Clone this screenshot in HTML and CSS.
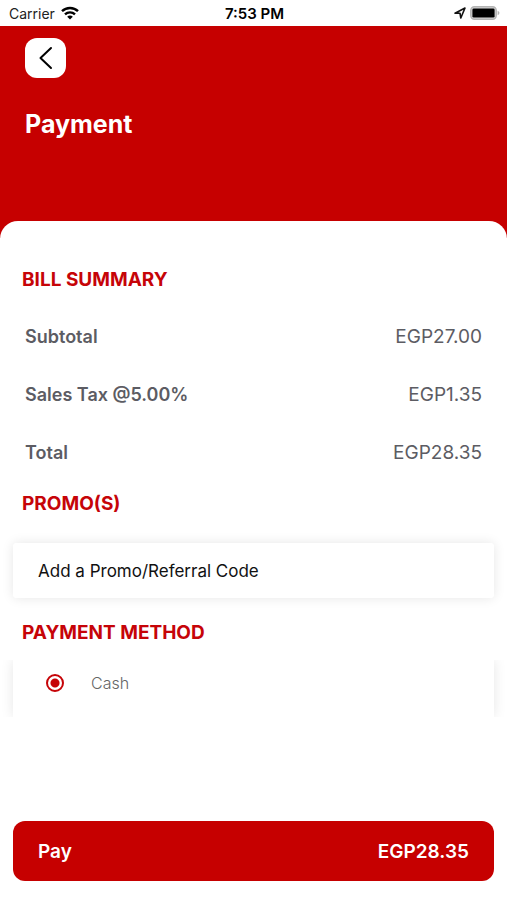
FILE: index.html
```html
<!DOCTYPE html>
<html lang="en">
<head>
<meta charset="utf-8">
<meta name="viewport" content="width=device-width, initial-scale=1">
<title>Payment</title>
<link rel="stylesheet" href="styles.css">
</head>
<body>
<div class="screen">
  <div class="status">
    <div class="status-left">
      <span>Carrier</span>
      <svg width="18" height="14" viewBox="0 0 18 14" fill="none" stroke="#000" stroke-width="2.4" aria-hidden="true">
        <path d="M1 5.2C5.4.9 12.6.9 17 5.2"/>
        <path d="M4 8.4c2.8-2.7 7.2-2.7 10 0"/>
        <path d="M6.2 10.7c1.6-1.5 4-1.5 5.6 0L9 13.6z" fill="#000" stroke="none"/>
      </svg>
    </div>
    <span class="status-time">7:53 PM</span>
    <div class="status-right">
      <svg width="12" height="12" viewBox="0 0 12 12" fill="none" stroke="#111" stroke-width="1.6" stroke-linejoin="round" aria-hidden="true">
        <path d="M1 6.2 11 1 6.8 11 6 6.2z"/>
      </svg>
      <svg width="30" height="14" viewBox="0 0 30 14" aria-hidden="true">
        <rect x=".8" y=".8" width="25.4" height="12.4" rx="3.6" fill="#d8d8d8" stroke="#b4b4b4" stroke-width="1.5"/>
        <rect x="2.4" y="2.4" width="22.2" height="9.2" rx="1.4" fill="#000"/>
        <path d="M27.6 4.8c2.4.8 2.4 3.6 0 4.4z" fill="#b4b4b4"/>
      </svg>
    </div>
  </div>

  <header class="header">
    <button class="back" type="button" aria-label="Back">
      <svg width="16" height="24" viewBox="0 0 16 24" fill="none" stroke="#000" stroke-width="2" stroke-linecap="round" stroke-linejoin="round" aria-hidden="true">
        <path d="M13 2 2.5 12 13 22"/>
      </svg>
    </button>
    <h1>Payment</h1>
  </header>

  <main class="sheet">
    <h2>BILL SUMMARY</h2>
    <dl class="bill">
      <div class="bill-row"><dt>Subtotal</dt><dd>EGP27.00</dd></div>
      <div class="bill-row"><dt>Sales Tax @5.00%</dt><dd>EGP1.35</dd></div>
      <div class="bill-row"><dt>Total</dt><dd>EGP28.35</dd></div>
    </dl>

    <h2>PROMO(S)</h2>
    <button class="promo" type="button">Add a Promo/Referral Code</button>

    <h2>PAYMENT METHOD</h2>
    <div class="methods">
      <div class="methods-card">
        <label class="method"><input type="radio" name="method" checked><span>Cash</span></label>
      </div>
    </div>
  </main>

  <footer class="footer">
    <button class="pay" type="button"><span>Pay</span><span>EGP28.35</span></button>
  </footer>
</div>
</body>
</html>
```

FILE: styles.css
```css
* {
  box-sizing: border-box;
}

body {
  margin: 0;
  background: #fff;
  font-family: Inter, "Liberation Sans", sans-serif;
}

button {
  border: 0;
  font-family: inherit;
  cursor: pointer;
}

svg {
  display: block;
}

.screen {
  display: flex;
  flex-direction: column;
  min-height: 100vh;
}

.status {
  display: grid;
  grid-template-columns: 1fr auto 1fr;
  align-items: center;
  height: 26px;
  padding: 0 7px 0 9px;
  font-size: 14px;
  color: #222;
}

.status-left,
.status-right {
  display: flex;
  align-items: center;
  gap: 6px;
}

.status-right {
  justify-content: flex-end;
  gap: 4px;
}

.status-time {
  font-size: 15px;
  font-weight: 600;
  color: #000;
}

.header {
  padding: 12px 25px 98px;
  background: #c60000;
}

.back {
  display: flex;
  align-items: center;
  justify-content: center;
  width: 41px;
  height: 40px;
  padding: 0;
  border-radius: 12px;
  background: #fff;
}

h1 {
  margin: 30px 0 0;
  font-size: 25px;
  line-height: 32px;
  font-weight: 700;
  color: #fff;
}

.sheet {
  margin-top: -17px;
  padding-top: 47px;
  border-radius: 18px 18px 0 0;
  background: #fff;
}

h2 {
  margin: 0 22px;
  font-size: 19px;
  line-height: 24px;
  font-weight: 700;
  color: #c60408;
}

.bill {
  margin: 15px 25px 11px;
}

.bill-row {
  display: flex;
  align-items: center;
  justify-content: space-between;
  height: 58px;
  font-size: 19px;
  color: #5c5c63;
}

dt {
  font-size: 18px;
  font-weight: 600;
}

dd {
  margin: 0;
}

.promo {
  display: block;
  width: calc(100% - 26px);
  height: 55px;
  margin: 27px 13px 23px;
  padding: 0 25px;
  border-radius: 3px;
  background: #fff;
  box-shadow: 0 0 12px rgba(0, 0, 0, 0.1);
  font-size: 17px;
  text-align: left;
  color: #111;
}

.methods {
  margin-top: 15px;
  padding: 0 13px;
  overflow: hidden;
}

.methods-card {
  height: 57px;
  background: #fff;
  box-shadow: 0 0 12px rgba(0, 0, 0, 0.1);
}

.method {
  display: flex;
  align-items: center;
  gap: 27px;
  height: 46px;
  padding-left: 33px;
  font-size: 16px;
  font-weight: 300;
  color: #666;
}

.method input {
  appearance: none;
  width: 18px;
  height: 18px;
  margin: 0;
  border: 2px solid #c60408;
  border-radius: 50%;
  background: radial-gradient(circle, #c60408 4px, #fff 5px);
}

.footer {
  margin-top: auto;
  padding: 24px 13px 19px;
}

.pay {
  display: flex;
  align-items: center;
  justify-content: space-between;
  width: 100%;
  height: 60px;
  padding: 0 25px;
  border-radius: 12px;
  background: #c60000;
  font-size: 19px;
  font-weight: 600;
  color: #fff;
}
```
